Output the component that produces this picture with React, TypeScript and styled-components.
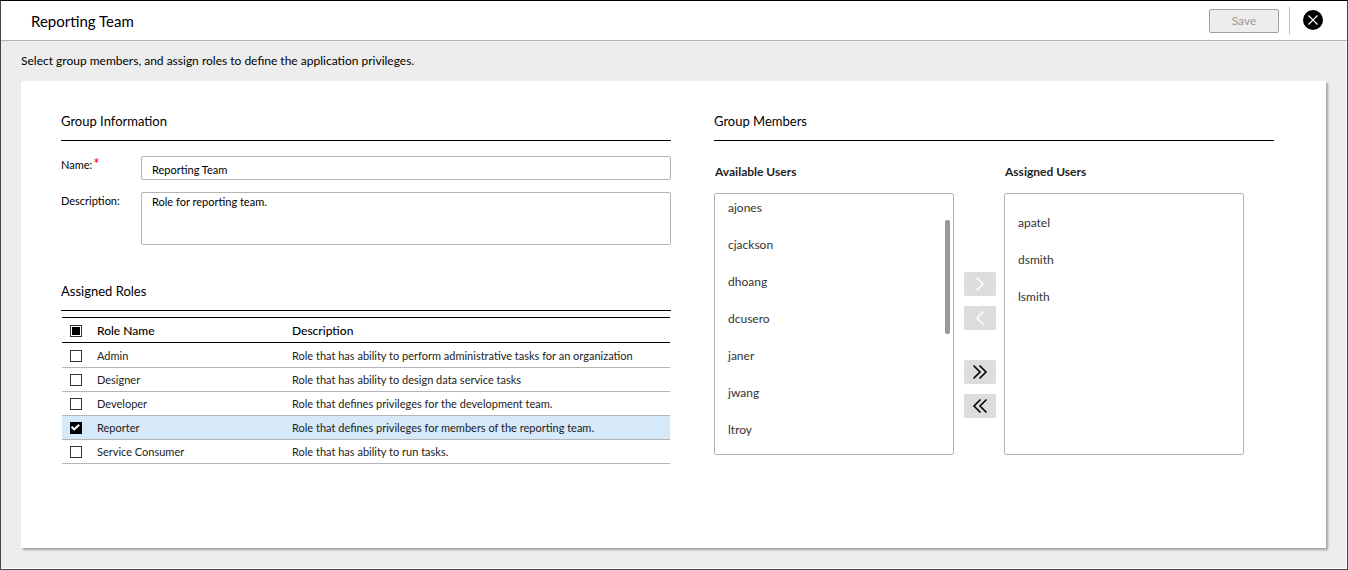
import React, { useEffect, useRef, useState } from "react";
import styled, { createGlobalStyle, css } from "styled-components";

const GlobalStyle = createGlobalStyle`
  *, *::before, *::after { box-sizing: border-box; }
  body {
    margin: 0;
    background: #fff;
    color: #000;
    font: 12px/20px Lato, "Liberation Sans", sans-serif;
  }
  button, input, textarea { font: inherit; color: inherit; }
  h1, h2, h3, p, ul { margin: 0; padding: 0; }
`;

const Frame = styled.div`
  display: flex;
  flex-direction: column;
  min-height: 100vh;
  border: 1px solid #444;
  border-top-color: #000;
`;

const Header = styled.header`
  display: flex;
  align-items: center;
  height: 40px;
  padding: 0 24px 0 30px;
  border-bottom: 1px solid #b4b4b4;
`;

const PageTitle = styled.h1`
  flex: 1;
  font-size: 15px;
  font-weight: 400;
  line-height: 20px;
`;

const SaveButton = styled.button`
  width: 70px;
  height: 24px;
  padding: 1px 0 0;
  border: 1px solid #9f9f9f;
  border-radius: 2px;
  background: #ededed;
  color: #9b9b9b;
`;

const Divider = styled.span`
  width: 1px;
  height: 27px;
  margin: 0 13px 0 10px;
  background: #b9b9b9;
`;

const CloseButton = styled.button`
  display: flex;
  padding: 0 0 1px;
  border: 0;
  background: none;
`;

const Main = styled.main`
  flex: 1;
  margin: 0 1px 1px 0;
  padding: 10px 20px 20px;
  background: #ededed;
`;

const Intro = styled.p`
  margin-bottom: 10px;
`;

const Card = styled.div`
  display: grid;
  grid-template-columns: 61fr 56fr;
  column-gap: 43px;
  padding: 30px 52px 84px 40px;
  background: #fff;
  box-shadow: 2px 2px 2px #a3a3a3;
`;

const SectionTitle = styled.h2`
  padding-bottom: 9px;
  border-bottom: 1px solid #000;
  font-size: 13px;
  font-weight: 400;
  line-height: 20px;
`;

const Fields = styled.div`
  display: grid;
  grid-template-columns: 80px 1fr;
  row-gap: 12px;
  padding: 15px 0 36px;
  font-size: 11px;
  line-height: 18px;
`;

const Required = styled.span`
  padding-left: 1px;
  color: #e00;
  font-size: 15px;
  line-height: 1;
  vertical-align: top;
`;

const fieldBox = css`
  width: 100%;
  padding: 0 10px;
  border: 1px solid #b4b4b4;
  border-radius: 2px;
  background: #fff;
  outline: none;
`;

const TextInput = styled.input`
  ${fieldBox}
  height: 24px;
  padding-top: 2px;
`;

const TextArea = styled.textarea`
  ${fieldBox}
  display: block;
  height: 53px;
  resize: none;
`;

const RolesTable = styled.table`
  width: calc(100% - 2px);
  margin: 6px 1px 0;
  border-collapse: separate;
  border-spacing: 0;
  border-top: 1px solid #000;
  table-layout: fixed;
`;

const CheckCell = styled.td`
  width: 35px;
`;

const HeadRow = styled.tr`
  th {
    height: 25px;
    padding: 1px 0 0;
    border-bottom: 1px solid #000;
    font-weight: 500;
    text-align: left;
  }
  th:nth-child(2) { width: 195px; }
`;

const RoleRow = styled.tr<{ $selected: boolean }>`
  background: ${(p) => (p.$selected ? "#d6e9f8" : "#fff")};
  color: #222;
  font-size: 11px;
  td {
    height: 24px;
    padding: 1px 0 0;
    border-bottom: 1px solid #b4b4b4;
  }
  &:first-child td { height: 25px; }
`;

const CheckWrap = styled.span`
  position: relative;
  display: block;
  width: 12px;
  height: 12px;
  margin-left: 8px;
  svg { position: absolute; inset: 0; pointer-events: none; }
`;

const CheckInput = styled.input`
  display: block;
  width: 12px;
  height: 12px;
  margin: 0;
  appearance: none;
  border: 1px solid #333;
  background: #fff;
  &:checked { background: #000; border-color: #000; }
`;

const Members = styled.div`
  display: grid;
  grid-template-columns: 1fr 34px 1fr;
  column-gap: 8px;
  padding: 21px 30px 0 0;
`;

const ListTitle = styled.h3`
  padding: 0 1px 11px;
  color: #222;
  font-size: 12px;
  font-weight: 700;
  line-height: 20px;
`;

const ListBox = styled.div<{ $scrolled?: boolean }>`
  position: relative;
  height: 262px;
  padding: ${(p) => (p.$scrolled ? "0" : "15px")} 0 0;
  overflow: hidden;
  border: 1px solid #b4b4b4;
  border-radius: 2px;
`;

const UserList = styled.ul`
  list-style: none;
`;

const User = styled.li`
  height: 37px;
  padding: 4px 13px 0;
  color: #333;
`;

const ScrollThumb = styled.span`
  position: absolute;
  top: 26px;
  right: 3px;
  width: 5px;
  height: 114px;
  border-radius: 2px;
  background: #999;
`;

const Movers = styled.div`
  display: flex;
  flex-direction: column;
  gap: 10px;
  padding: 110px 0 0 2px;
`;

const MoveButton = styled.button<{ $group?: boolean }>`
  display: flex;
  align-items: center;
  justify-content: center;
  width: 32px;
  height: 24px;
  margin-top: ${(p) => (p.$group ? "20px" : "0")};
  padding: 0;
  border: 0;
  border-radius: 2px;
  background: #ddd;
  color: #000;
  &:disabled { color: #fff; }
`;

const roles = [
  ["Admin", "Role that has ability to perform administrative tasks for an organization"],
  ["Designer", "Role that has ability to design data service tasks"],
  ["Developer", "Role that defines privileges for the development team."],
  ["Reporter", "Role that defines privileges for members of the reporting team."],
  ["Service Consumer", "Role that has ability to run tasks."],
];

const available = ["ajones", "cjackson", "dhoang", "dcusero", "janer", "jwang", "ltroy"];
const assigned = ["apatel", "dsmith", "lsmith"];

type CheckProps = { label: string; checked: boolean; mixed?: boolean; onChange: () => void };

function Check({ label, checked, mixed = false, onChange }: CheckProps) {
  const ref = useRef<HTMLInputElement>(null);
  useEffect(() => {
    if (ref.current) ref.current.indeterminate = mixed;
  }, [mixed]);
  return (
    <CheckWrap>
      <CheckInput ref={ref} type="checkbox" aria-label={label} checked={checked} onChange={onChange} />
      {mixed && (
        <svg width="12" height="12" viewBox="0 0 12 12" aria-hidden="true">
          <rect x="2" y="2" width="8" height="8" fill="#000" />
        </svg>
      )}
      {checked && !mixed && (
        <svg width="12" height="12" viewBox="0 0 12 12" aria-hidden="true">
          <path d="M1.5 4.8 L4.2 7.3 L9.2 2.8" fill="none" stroke="#fff" strokeWidth="2" />
        </svg>
      )}
    </CheckWrap>
  );
}

function Arrow({ d }: { d: string }) {
  return (
    <svg width="18" height="16" viewBox="0 0 18 16" aria-hidden="true">
      <path d={d} fill="none" stroke="currentColor" strokeWidth="1.6" />
    </svg>
  );
}

export default function App() {
  const [selected, setSelected] = useState<string[]>(["Reporter"]);
  const all = selected.length === roles.length;
  const toggle = (name: string) =>
    setSelected((s) => (s.includes(name) ? s.filter((n) => n !== name) : [...s, name]));

  return (
    <Frame>
      <GlobalStyle />
      <Header>
        <PageTitle>Reporting Team</PageTitle>
        <SaveButton type="button" disabled>Save</SaveButton>
        <Divider />
        <CloseButton type="button" aria-label="Close">
          <svg width="20" height="20" viewBox="0 0 20 20" aria-hidden="true">
            <circle cx="10" cy="10" r="10" fill="#000" />
            <path d="M5.5 5.5 L14.5 14.5 M14.5 5.5 L5.5 14.5" stroke="#fff" strokeWidth="1.2" />
          </svg>
        </CloseButton>
      </Header>
      <Main>
        <Intro>Select group members, and assign roles to define the application privileges.</Intro>
        <Card>
          <section>
            <SectionTitle>Group Information</SectionTitle>
            <Fields>
              <label htmlFor="group-name">Name:<Required>*</Required></label>
              <TextInput id="group-name" defaultValue="Reporting Team" />
              <label htmlFor="group-description">Description:</label>
              <TextArea id="group-description" defaultValue="Role for reporting team." />
            </Fields>
            <SectionTitle>Assigned Roles</SectionTitle>
            <RolesTable>
              <thead>
                <HeadRow>
                  <CheckCell as="th">
                    <Check
                      label="Select all roles"
                      checked={all}
                      mixed={selected.length > 0 && !all}
                      onChange={() => setSelected(all ? [] : roles.map((r) => r[0]))}
                    />
                  </CheckCell>
                  <th>Role Name</th>
                  <th>Description</th>
                </HeadRow>
              </thead>
              <tbody>
                {roles.map(([name, description]) => (
                  <RoleRow key={name} $selected={selected.includes(name)}>
                    <CheckCell>
                      <Check label={name} checked={selected.includes(name)} onChange={() => toggle(name)} />
                    </CheckCell>
                    <td>{name}</td>
                    <td>{description}</td>
                  </RoleRow>
                ))}
              </tbody>
            </RolesTable>
          </section>
          <section>
            <SectionTitle>Group Members</SectionTitle>
            <Members>
              <div>
                <ListTitle>Available Users</ListTitle>
                <ListBox $scrolled>
                  <UserList>{available.map((u) => <User key={u}>{u}</User>)}</UserList>
                  <ScrollThumb />
                </ListBox>
              </div>
              <Movers>
                <MoveButton type="button" disabled aria-label="Assign user"><Arrow d="M5.5 1.5 L12 8 L5.5 14.5" /></MoveButton>
                <MoveButton type="button" disabled aria-label="Remove user"><Arrow d="M12.5 1.5 L6 8 L12.5 14.5" /></MoveButton>
                <MoveButton type="button" $group aria-label="Assign all users"><Arrow d="M2.5 1.5 L9 8 L2.5 14.5 M8.5 1.5 L15 8 L8.5 14.5" /></MoveButton>
                <MoveButton type="button" aria-label="Remove all users"><Arrow d="M9.5 1.5 L3 8 L9.5 14.5 M15.5 1.5 L9 8 L15.5 14.5" /></MoveButton>
              </Movers>
              <div>
                <ListTitle>Assigned Users</ListTitle>
                <ListBox>
                  <UserList>{assigned.map((u) => <User key={u}>{u}</User>)}</UserList>
                </ListBox>
              </div>
            </Members>
          </section>
        </Card>
      </Main>
    </Frame>
  );
}
